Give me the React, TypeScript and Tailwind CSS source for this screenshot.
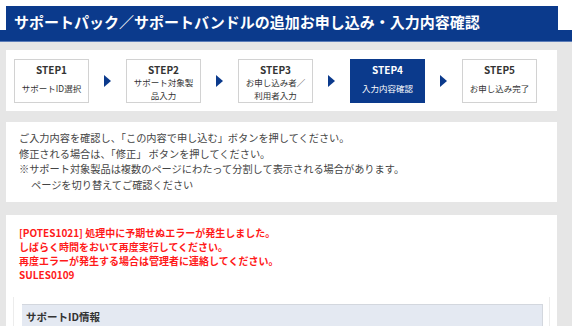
import React from "react";

interface Step {
  label: string;
  lines: string[];
  active?: boolean;
}

const steps: Step[] = [
  { label: "STEP1", lines: ["サポートID選択"] },
  { label: "STEP2", lines: ["サポート対象製", "品入力"] },
  { label: "STEP3", lines: ["お申し込み者／", "利用者入力"] },
  { label: "STEP4", lines: ["入力内容確認"], active: true },
  { label: "STEP5", lines: ["お申し込み完了"] },
];

const errorLines = [
  "[POTES1021] 処理中に予期せぬエラーが発生しました。",
  "しばらく時間をおいて再度実行してください。",
  "再度エラーが発生する場合は管理者に連絡してください。",
  "SULES0109",
];

// little blue arrow between the step boxes
const Arrow = () => (
  <div className="w-[37px] flex justify-center">
    <svg width="7" height="12" viewBox="0 0 7 12">
      <polygon points="0,0 7,6 0,12" fill="#0b3a8c" />
    </svg>
  </div>
);

const StepBox = ({ step }: { step: Step }) => (
  <div
    className={`w-[75px] h-[44px] flex flex-col items-center border ${
      step.active ? "bg-[#0b3a8c] border-[#0b3a8c] text-white" : "bg-white border-[#d2d2d2] text-[#333]"
    }`}
  >
    <div className="pt-[4px] text-[10px] leading-[12px] font-bold">{step.label}</div>
    <div className="flex-1 flex flex-col justify-center items-center text-[8.5px] leading-[13px]">
      {step.lines.map((l) => (
        <div key={l}>{l}</div>
      ))}
    </div>
  </div>
);

export default function App() {
  return (
    <div
      className="w-[572px] h-[326px] overflow-hidden bg-[#e6e6e6] text-[#333]"
      style={{ fontFamily: '"Noto Sans CJK JP", "Noto Sans", sans-serif' }}
    >
      {/* page title */}
      <div className="bg-white pt-[6px]">
        <div className="ml-[6px] mr-[14px] h-[24px] bg-[#0b3a8c]">
          <div className="pl-[8px] pt-[8px] text-[15px] leading-[15px] font-bold text-white whitespace-nowrap">
            サポートパック／サポートバンドルの追加お申し込み・入力内容確認
          </div>
        </div>
        <div className="h-[12px] bg-[#0b3a8c] border-b border-[#5b7cb8]" />
      </div>

      <div className="pl-[6px] pr-[15px]">
        {/* steps */}
        <div className="mt-[8px] bg-white h-[61px] px-[8px] flex items-center">
          {steps.map((s, i) => (
            <React.Fragment key={s.label}>
              {i > 0 && <Arrow />}
              <StepBox step={s} />
            </React.Fragment>
          ))}
        </div>

        {/* guidance */}
        <div className="mt-[11px] bg-white h-[80px] px-[13px] pt-[8px] text-[10.2px] leading-[15.5px] text-[#444] whitespace-nowrap">
          <div>ご入力内容を確認し、「この内容で申し込む」ボタンを押してください。</div>
          <div>修正される場合は、「修正」 ボタンを押してください。</div>
          <div>※サポート対象製品は複数のページにわたって分割して表示される場合があります。</div>
          <div className="pl-[12px]">ページを切り替えてご確認ください</div>
        </div>

        {/* error + detail */}
        <div className="mt-[13px] bg-white pt-[11px] h-[200px]">
          <div className="px-[13px] text-[10px] leading-[14px] font-bold text-[#ff1a1a]">
            {errorLines.map((l) => (
              <div key={l}>{l}</div>
            ))}
          </div>
          <div className="mt-[15px] mx-[7px] border-x border-[#ececec] pt-[7px] pl-[8px] pr-[6px] h-[60px]">
            <div className="h-[40px] bg-[#e4e9f2] border-t border-r border-[#d3d7de] pl-[4px] pt-[5px] text-[10.5px] leading-[13px] font-bold text-[#333]">
              サポートID情報
            </div>
          </div>
        </div>
      </div>
    </div>
  );
}
